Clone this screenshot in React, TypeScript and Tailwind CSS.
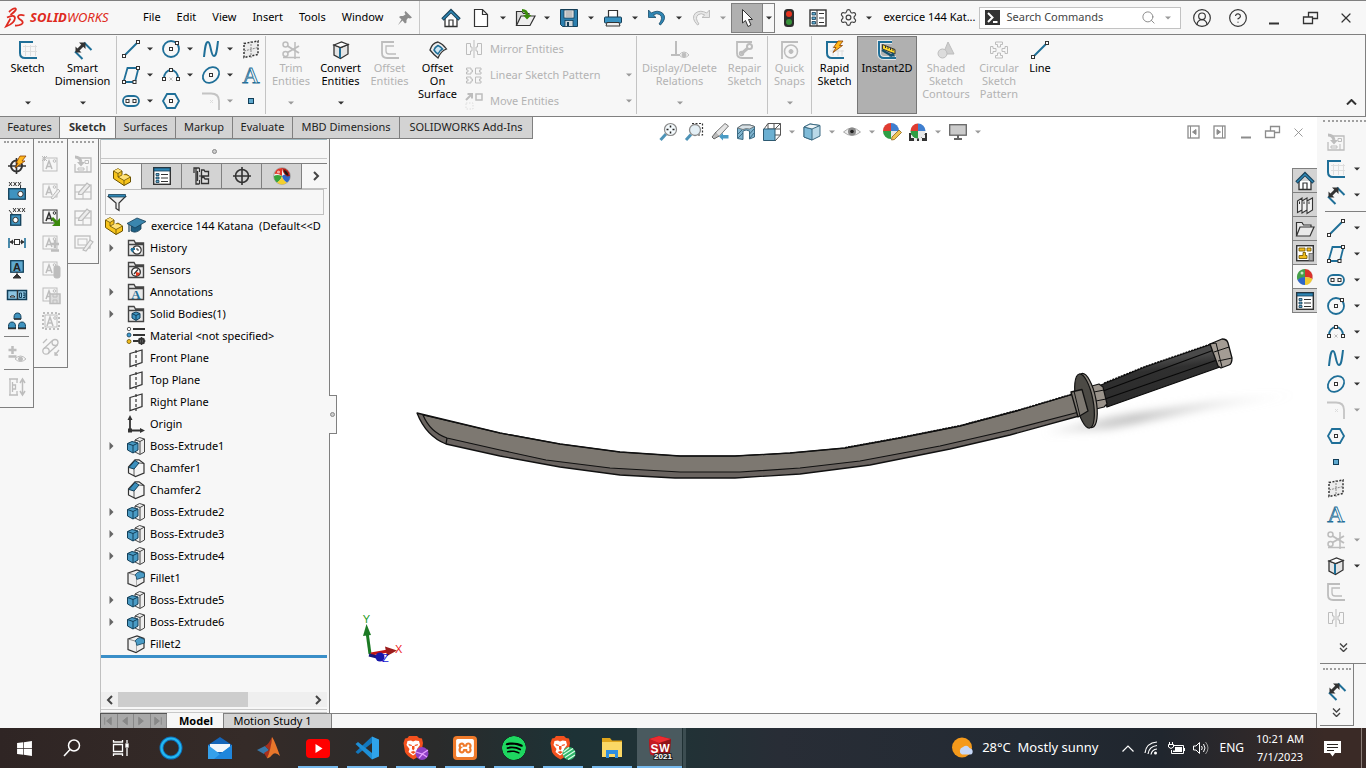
import type { ReactNode } from "react";
import { CircleHelp, CircleUserRound, Search, Settings, X } from "lucide-react";
import { FaWindows } from "react-icons/fa";
import { SiSpotify, SiXampp } from "react-icons/si";

type IconName = string;

const BLUE = "#1f6f98";
const SKY = "#5fa9cf";
const DARK = "#333333";
const GREY = "#bdbdbd";

const sq = (x: number, y: number, c = DARK) => (
  <rect x={x - 1.5} y={y - 1.5} width="3" height="3" fill="#fff" stroke={c} />
);

const ball = (x: number, y: number, r: number) => (
  <g stroke="none">
    <circle cx={x} cy={y} r={r} fill="#e8e8e8" />
    <path d={`M${x} ${y}V${y - r}A${r} ${r} 0 0 1 ${x + r} ${y}Z`} fill="#3f7fd0" />
    <path d={`M${x} ${y}V${y - r}A${r} ${r} 0 0 0 ${x - r} ${y}Z`} fill="#e03c31" />
    <path d={`M${x} ${y}V${y + r}A${r} ${r} 0 0 1 ${x - r} ${y}Z`} fill="#2f9e44" />
  </g>
);

const noteA = (
  <>
    <rect x="1" y="2" width="14" height="13" />
    <path d="M4 13L7 5L10 13M5 10.5H9" strokeWidth="1.5" />
    <circle cx="12.5" cy="5" r="1.3" />
  </>
);

const folder = <path d="M1.5 16.5V1.5H7L8.5 4H16.5V16.5ZM1.5 5.5H16" fill="#e9e9e9" stroke="#444" strokeWidth="1.4" />;

/* Glyphs on an 18-unit grid; `c` is the outline colour and `b` the accent colour. */
function glyph(name: IconName, c: string, b: string): ReactNode {
  switch (name) {
    case "sketch":
      return (<><path d="M6.5 4V15M11.5 4V15M16.5 4V15M4 5.5H18M4 10.5H18" stroke="#dedede" /><path d="M14 1H1V12Q1 17 6 17H18" stroke={b} strokeWidth="2" /></>);
    case "smart":
      return (<><path d="M1 10.5L8.5 18M10 1.5L17.5 9" stroke={b} strokeWidth="2" /><path d="M4 9L9 4" strokeWidth="3" /><path d="M1.5 11.5V5.5L7.5 11.5ZM5 1.5H11.5V8Z" fill={c} stroke="none" /></>);
    case "line":
      return (<><path d="M2 16L16 2" stroke={b} strokeWidth="2" />{sq(2, 16, c)}{sq(16, 2, c)}</>);
    case "circle":
      return (<><circle cx="9" cy="9" r="8" stroke={b} strokeWidth="1.8" />{sq(9, 9, c)}{sq(15, 3, c)}</>);
    case "spline":
      return <path d="M2 17C3 8 3.5 2 6 2C9 2 8.5 16 12 16C14.5 16 15 9 16 1" stroke={b} strokeWidth="2" />;
    case "plane3d":
      return (<><path d="M2 3.5L16 1V14.5L2 17.5Z" fill="#ececec" strokeWidth="1.5" strokeDasharray="2 1.5" /><path d="M9 1V18M2 11L16 7.5" stroke="#888" strokeDasharray="2 1" /></>);
    case "para":
      return (<><path d="M5.5 2H16.5L13 16H1.5Z" stroke={b} strokeWidth="1.8" />{sq(2, 16, c)}{sq(16, 2, c)}{sq(12.5, 16, c)}</>);
    case "arc":
      return (<><path d="M2 12A7 8 0 0 1 16 12" stroke={b} strokeWidth="1.8" /><path d="M7.5 11.5L10.5 14.5M10.5 11.5L7.5 14.5" stroke="#bbb" />{sq(2, 13, c)}{sq(16, 13, c)}{sq(9, 4, c)}</>);
    case "ellipse":
      return (<><ellipse cx="9" cy="9" rx="9" ry="7" transform="rotate(-42 9 9)" stroke={b} strokeWidth="1.8" />{sq(9, 9, c)}</>);
    case "letter":
      return <text x="9" y="17" textAnchor="middle" fontFamily="Liberation Serif, serif" fontSize="24" fill="#fff" stroke={b} strokeWidth="0.9">A</text>;
    case "slot":
      return (<><rect x="1" y="4" width="16" height="10" rx="5" stroke={b} strokeWidth="1.8" />{sq(5.5, 9, c)}{sq(12.5, 9, c)}</>);
    case "hex":
      return (<><path d="M5 2H13L17 9L13 16H5L1 9Z" stroke={b} strokeWidth="1.8" />{sq(9, 9, c)}</>);
    case "fillet":
      return (<><path d="M0 1.5H9Q17 1.5 17 9V18" stroke="#c4c4c4" strokeWidth="1.8" /><path d="M8 8L11 11M11 8L8 11" stroke="#ddd" /></>);
    case "point":
      return <rect x="6.5" y="6.5" width="5" height="5" fill={SKY} stroke="#123f59" />;
    case "trim":
      return (<><circle cx="3.5" cy="3.5" r="2.5" strokeWidth="1.5" /><circle cx="3.5" cy="13" r="2.5" strokeWidth="1.5" /><path d="M5.5 5L17 12M5.5 11.5L17 5" strokeWidth="2" /><path d="M1 16.5H18M13 1V18" strokeWidth="1.5" /></>);
    case "convert":
      return (<><path d="M2 4L9 6.5L16 3.5V13L8.5 17.5L2 14Z" fill="#e4e4e4" strokeWidth="1.3" /><path d="M2 4L9.5 1L16 3.5L8.5 6.5Z" fill="#fff" strokeWidth="1.3" /><path d="M8 7V17" stroke={b} strokeWidth="2" /></>);
    case "offset":
      return (<><path d="M13 1H1V12Q1 17 6 17H18" strokeWidth="1.8" /><path d="M13 5H5V10Q5 13 8 13H15" strokeWidth="1.3" /></>);
    case "surface":
      return (<><path d="M1 9Q3 2 9 1Q14 3 17.5 8Q12 10 9 17Q5 14 1 9Z" fill="#eee" strokeWidth="1.3" /><path d="M5 9Q6 6 9 4.5Q12 6 13.5 8Q10.5 9.5 9 13Q6.5 11.5 5 9Z" fill="#cfe6f3" stroke={b} strokeWidth="1.5" /></>);
    case "mirror":
      return <path d="M9 0V18M1.5 3.5H5.5V7H7V11H5.5V14.5H1.5ZM16.5 3.5H12.5V7H11V11H12.5V14.5H16.5Z" />;
    case "linpat":
      return <path d="M1.5 2H6V4H7.5V6H6V8H1.5V6H3V4H1.5ZM10.5 2H16V4H14.5V6H16V8H10.5ZM1.5 11H6V13H7.5V15H6V17H1.5V15H3V13H1.5ZM10.5 11H16V13H14.5V15H16V17H10.5Z" />;
    case "move":
      return (<><path d="M1 8L6 3M2.5 2H7V6.5" strokeWidth="2" /><rect x="11" y="2" width="6" height="6" strokeWidth="1.5" /><rect x="1" y="11" width="7" height="6" strokeDasharray="1.5 1.5" stroke="#ddd" /></>);
    case "relations":
      return (<><path d="M5 0V14M0 14H9" strokeWidth="2" /><path d="M8 14Q13 8 18 14Q13 19 8 14Z" /><circle cx="13" cy="14" r="2" fill={c} /></>);
    case "repair":
      return (<><path d="M16 1H1V12Q1 17 6 17H17" strokeWidth="1.8" /><path d="M5 13L12 7" strokeWidth="3" /><circle cx="13.5" cy="5.5" r="2.5" strokeWidth="2" /><circle cx="5.5" cy="12.5" r="1.8" strokeWidth="1.8" /></>);
    case "snaps":
      return (<><path d="M17 1H1V18" strokeWidth="1.8" /><circle cx="10" cy="10.5" r="6.5" strokeWidth="1.5" /><circle cx="10" cy="10.5" r="2" fill={c} /></>);
    case "rapid":
      return (<><path d="M7 5V15M12 5V15M16 9V15M4 10H18" stroke="#dedede" /><path d="M14 1H1V12Q1 17 6 17H18" stroke={b} strokeWidth="2" /><path d="M12 0H17L13.5 4.5H16.5L7 11.5L10 6.5H7.5Z" fill="#ffb71b" stroke="#8a3d00" strokeWidth="0.8" /></>);
    case "instant":
      return (<><path d="M14 1H1V12Q1 17 6 17H18" stroke="#fff" strokeWidth="4" strokeOpacity="0.7" /><path d="M14 1H1V12Q1 17 6 17H18" stroke={b} strokeWidth="2" /><path d="M4.5 3.5L17 8.5V13L4.5 8Z" fill="#ffd92e" stroke="#333" strokeWidth="1" /><path d="M7.5 5V7M10 6V8M12.5 7V9M15 8V10" stroke="#333" /><path d="M4 9L14 15" stroke="#14506f" strokeWidth="2.2" /><path d="M11 15.5H17L15 11Z" fill="#14506f" stroke="none" /></>);
    case "shaded":
      return (<><path d="M11 1L17 13H6Z" fill="#cfcfcf" /><circle cx="5.5" cy="12.5" r="4.5" fill="#dcdcdc" /></>);
    case "circpat":
      return <path d="M5.5 1H12.5V3.5H10.5V6H7.5V3.5H5.5ZM5.5 17H12.5V14.5H10.5V12H7.5V14.5H5.5ZM0.5 5.5V12.5H3V10.5H6V7.5H3V5.5ZM17.5 5.5V12.5H15V10.5H12V7.5H15V5.5Z" />;
    case "home":
      return (<><path d="M3 9V17.5H15V9" fill="#fff" strokeWidth="1.3" /><path d="M0.5 10.5L9 2L17.5 10.5" stroke="#173f57" strokeWidth="3.5" /><path d="M1 10L9 2.2L17 10" stroke="#2f88b5" strokeWidth="1.5" /><path d="M7 17.5V11H11V17.5" strokeWidth="1.2" /></>);
    case "new":
      return <path d="M2.5 0.5H10.5L15.5 5.5V17.5H2.5ZM10.5 0.5V5.5H15.5" fill="#fff" strokeWidth="1.2" />;
    case "open":
      return (<><path d="M0.5 16.5V2.5H6L7.5 4.5H13V7" fill="#ddd" strokeWidth="1.2" /><path d="M0.5 16.5L5 7H19L14 16.5Z" fill="#eee" strokeWidth="1.2" /><path d="M6 0Q12 0 12.5 6H15.5L11 10.5L7 6H9.5Q9.5 3 6 2.5Z" fill="#3a8a0c" stroke="none" /></>);
    case "save":
      return (<><path d="M0.5 0.5H17.5V17.5H2.5L0.5 15.5Z" fill="#2c7fae" stroke="#173f57" /><rect x="4" y="1" width="10" height="8" fill="#eee" stroke="#173f57" strokeWidth="0.8" /><path d="M5.5 3H12.5M5.5 5H12.5M5.5 7H12.5" stroke="#777" strokeWidth="0.8" /><rect x="5" y="11.5" width="8" height="6" fill="#cfd8dd" stroke="#173f57" strokeWidth="0.8" /><rect x="7" y="13" width="2" height="4" fill="#173f57" stroke="none" /></>);
    case "print":
      return (<><path d="M4.5 8V1.5H13.5V8" fill="#fff" strokeWidth="1.2" /><rect x="0.5" y="8" width="17" height="6" rx="1" fill="#3b93c1" stroke="#173f57" /><path d="M3 13.5H15L16 17H2Z" fill="#eee" strokeWidth="1" /></>);
    case "undo":
      return <path d="M0.5 1V8.5H8L5.3 6Q9 3.5 12 5.8Q15.5 9 11 15L12.5 16Q19.5 9 14.5 4Q9.5 0.5 3.3 4Z" fill="#2f86b4" stroke="#184b69" strokeWidth="0.8" />;
    case "redo":
      return <path d="M17.5 1V8.5H10L12.7 6Q9 3.5 6 5.8Q2.5 9 7 15L5.5 16Q-1.5 9 3.5 4Q8.5 0.5 14.7 4Z" fill="#e6e6e6" stroke="#bdbdbd" />;
    case "cursor":
      return <path d="M4.5 0.5V14L7.5 11.5L10 17.5L13 16L10.5 10.5H14.5Z" fill="#fff" stroke="#333" />;
    case "traffic":
      return (<><rect x="4" y="0" width="10" height="18" rx="3.5" fill="#2d2d2d" stroke="none" /><circle cx="9" cy="5" r="3" fill="#e6331f" stroke="none" /><circle cx="9" cy="13" r="3" fill="#38913a" stroke="none" /></>);
    case "options":
      return (<><rect x="1" y="1" width="16" height="16" fill="#fff" strokeWidth="1.4" /><path d="M8 1V17" /><path d="M3 3.5H6.5V6H3ZM3 8H6.5V10.5H3ZM3 12.5H6.5V15H3Z" fill={SKY} stroke="#173f57" strokeWidth="0.8" /><path d="M10 4.5H15M10 9H15M10 13.5H15" strokeWidth="1.2" /></>);
    case "proplist":
      return (<><rect x="0.7" y="0.7" width="16.6" height="16.6" fill="#fff" strokeWidth="1.4" /><rect x="1" y="1" width="16" height="3" fill="#2f86b4" stroke="#173f57" strokeWidth="0.8" /><path d="M3 6.5H6V8.5H3ZM3 10H6V12H3ZM3 13.5H6V15.5H3Z" fill={SKY} stroke="#173f57" strokeWidth="0.8" /><path d="M8 7.5H15M8 11H15M8 14.5H15" strokeWidth="1.2" /></>);
    case "part":
      return (<><path d="M0.5 3L5 0.7L9 3V8L13 6L17.5 9V14L11 17.5L0.5 10.5Z" fill="#f6c31c" stroke="#6b5200" /><path d="M0.5 3L5 5.5L9 3L5 0.7ZM5 8.5L9 6.5L17.5 9L11 12.5Z" fill="#ffe27a" stroke="none" /><path d="M0.5 3L5 5.5L9 3M5 5.5V9L11 12.5L17.5 9M11 12.5V17.5M5 9L9 7" stroke="#6b5200" strokeWidth="0.8" /></>);
    case "config":
      return (<><path d="M6.5 1H3V17H6.5M1 6V1H3M4.5 4V14" strokeWidth="1.3" /><path d="M6.5 1V5M6.5 13V17M6 9H9" /><path d="M8.5 3H11L12 4.5H15.5V9H8.5ZM8.5 10.5H11L12 12H15.5V16.5H8.5Z" fill="#ddd" strokeWidth="1.3" /></>);
    case "target":
      return (<><circle cx="9" cy="9" r="6.5" strokeWidth="1.6" /><path d="M9 0V18M0 9H18" strokeWidth="1.6" /></>);
    case "ball":
      return (<><circle cx="9" cy="9" r="8.3" fill="#f2f2f2" stroke="#777" strokeWidth="0.6" /><path d="M9 9V1A8 8 0 0 0 1.5 7Q5 6 9 9Z" fill="#e03324" stroke="none" /><path d="M9 9Q4 7 1 9A8 8 0 0 0 4 15.5Q8 13 9 9Z" fill="#3aa53a" stroke="none" /><path d="M9 9Q8 13 4 15.5A8 8 0 0 0 14 15.5Q10 13 9 9Z" fill="#f3cf2f" stroke="none" /><path d="M9 9Q10 13 14 15.5A8 8 0 0 0 17 8Q12 6 9 9Z" fill="#2f67c7" stroke="none" /><path d="M9 1A8 8 0 0 1 17 9L14 9.5Q10 7 9 1Z" fill="#b02018" stroke="none" /><path d="M11 3Q15 4 15.5 9Q11 7.5 11 3Z" fill="#201818" stroke="none" /><circle cx="5.5" cy="5" r="1.6" fill="#fff" opacity="0.6" stroke="none" /></>);
    case "rgb":
      return (<><circle cx="9" cy="9" r="8" fill="#ddd" stroke="none" /><path d="M9 9V1A8 8 0 0 0 1.5 12Q6 10 9 9Z" fill="#46a049" stroke="none" /><path d="M9 9V1A8 8 0 0 1 16.5 11Q13 9 9 9Z" fill="#d9322b" stroke="none" /><path d="M9 9Q14 9 16.500 11Q14 17 9 17Z" fill="#f1ca2e" stroke="none" /><path d="M9 9Q4 9 1.5 12Q4 17 9 17Z" fill="#2f67c7" stroke="none" /><circle cx="6" cy="5" r="1.5" fill="#fff" opacity="0.7" stroke="none" /></>);
    case "filter":
      return (<><path d="M0.5 3.5H17.5L11 10V17.5L8 15.5V10Z" fill="#eee" strokeWidth="1.2" /><path d="M0.5 1.5H17.5V4H0.5Z" fill="#2f86b4" stroke="#173f57" strokeWidth="0.8" /></>);
    case "cap":
      return (<><path d="M4 9V14Q9 17 14 12V7Z" fill="#1d5e82" stroke="#173f57" strokeWidth="0.8" /><path d="M0 6.5L10 1L19 4.5L8 11Z" fill="#3a86ae" stroke="#173f57" strokeWidth="0.8" /><path d="M2 7.5V15" stroke="#173f57" strokeWidth="1.2" /></>);
    case "history":
      return (<>{folder}<circle cx="10" cy="11" r="4.2" fill="#fff" strokeWidth="1.2" /><path d="M10 9V11H12" /><path d="M4 10H8M4 10L6 13" stroke={b} strokeWidth="1.8" /></>);
    case "sensors":
      return (<>{folder}<circle cx="9" cy="11" r="4.3" fill="#fff" strokeWidth="1.4" /><path d="M7 13L11 8.5" strokeWidth="1.3" /><path d="M9 11L13 12Q12 15 9 15Z" fill="#e5391f" stroke="none" /></>);
    case "annot":
      return (<>{folder}<text x="9" y="15.5" textAnchor="middle" fontFamily="Liberation Serif, serif" fontWeight="700" fontSize="13" fill={b} stroke="none">A</text></>);
    case "solid":
      return (<>{folder}<path d="M5 8.5L9 7L13 8.5V13L9 15.5L5 13Z" fill="#3b93c1" stroke="#123f59" /><path d="M5 8.5L9 10.5L13 8.5M9 10.5V15" stroke="#123f59" /></>);
    case "material":
      return (<><circle cx="2" cy="2" r="1.7" fill="#fff" strokeWidth="0.8" /><circle cx="2" cy="8" r="2" fill="#3b9bd0" stroke="#173f57" strokeWidth="0.8" /><circle cx="2" cy="14.5" r="2" fill="#f3bd1b" stroke="#6b5200" strokeWidth="0.8" /><path d="M6 2H18M6 8H18M6 14H11" strokeWidth="1.8" /><circle cx="14.5" cy="14" r="2.5" strokeWidth="2" /><path d="M14.5 10V18M10.5 14H18.5M12 11.5L17 16.5M17 11.5L12 16.5" strokeWidth="1" /></>);
    case "plane":
      return (<><path d="M3 4.5L15 1V13.5L3 17.5Z" strokeWidth="1.3" /><path d="M9 1V18" strokeDasharray="3 2" strokeWidth="1.2" /></>);
    case "origin":
      return (<><path d="M3 3V15.5H14" strokeWidth="1.8" /><path d="M0.5 5L3 0L5.5 5ZM13 13L18 15.5L13 18Z" fill={c} stroke="none" /><rect x="1" y="13.5" width="4" height="4" fill={c} stroke="none" /></>);
    case "boss":
      return (<><path d="M8 3L12.5 0.5L17.5 2V15L13 17.5L8 15Z" fill="#eee" stroke="#444" /><path d="M8 3L13 4.5V17M13 4.5L17.5 2" stroke="#444" /><path d="M0.5 6.5L5 4.5L11 6V13L6 16L0.5 13Z" fill="#4a9bc5" stroke="#123f59" /><path d="M0.5 6.5L6 8.5L11 6M6 8.5V16" stroke="#123f59" /></>);
    case "chamfer":
      return (<><path d="M1.5 8L8 0.8L12 0.8L17 4.5V14L8.5 17.5L1.5 14Z" fill="#f4f4f4" strokeWidth="1.2" /><path d="M2 8.5L8 1.5L12 4L7 10Z" fill="#3b8fbd" stroke="#123f59" /><path d="M12 4L17 4.5M7 10V17" strokeWidth="0.8" /></>);
    case "filletf":
      return (<><path d="M1 4L10 1L17 3.5V13L9 17.5L1 14.5Z" fill="#efefef" strokeWidth="1.2" /><path d="M8 6Q10 3 13 2.5L17.5 4.5V8L9.5 10.5Q10 7.5 8 6Z" fill="#4a9bc5" stroke="#123f59" strokeWidth="0.8" /><path d="M1 4L8 6" stroke="#777" strokeWidth="0.8" /><path d="M9.5 10.5V17" stroke="#999" strokeWidth="0.8" /></>);
    case "books":
      return (<><path d="M1.5 5L6 2V14L1.5 16.5ZM6 5L11 2V14L6 17ZM11 5L16.5 2V14L11 17.5Z" fill="#f1f1f1" strokeWidth="1.1" /><path d="M3.500 5.500V8M8 5.500V8M13 5.500V8" strokeWidth="1" /></>);
    case "folderopen":
      return <path d="M0.5 16V2.5H6L7.5 5H15V7M0.5 16L4 7H18L14 16Z" fill="#e9e9e9" strokeWidth="1.2" />;
    case "palette":
      return (<><rect x="0.7" y="1.7" width="16.6" height="15" fill="#fff" strokeWidth="1.4" /><path d="M3 4H9V7H3ZM11 4H15V7H11ZM7 8.5V11.5H3V14.5H11V11.5H9.5V8.5Z" fill="#f3bd1b" stroke="#6b5200" strokeWidth="0.8" /><rect x="13" y="9.5" width="4" height="7" fill="#aaa" stroke="#666" strokeWidth="0.8" /></>);
    case "zoomfit":
      return (<><path d="M7 11L1.500 17" stroke="#4d93b7" strokeWidth="3" /><circle cx="11.5" cy="6.5" r="6" fill="#f4fafd" stroke="#8a8a8a" strokeWidth="1.2" /><path d="M11.5 2.500V4.500M11.5 8.500V10.500M7.500 6.5H9.500M13.500 6.5H15.500" stroke="#222" strokeWidth="1.5" /></>);
    case "zoomarea":
      return (<><path d="M7 0.5H17.5V12H13" strokeDasharray="2 1.5" strokeWidth="1.2" /><path d="M6 11.5L1 17" stroke="#4d93b7" strokeWidth="3" /><circle cx="10" cy="7" r="5.5" fill="#e4eff5" stroke="#8a8a8a" strokeWidth="1.3" /></>);
    case "prevview":
      return (<><path d="M14 0.5L17.5 3L8 13.5L4 10Z" fill="#e4e4e4" stroke="#777" /><path d="M5 9L1 14L3 16L8 13" fill="#bbb" stroke="#666" /><path d="M8 13.5L12 10V12H17.5V15.5H12V17.5Z" fill="#4a9bc5" stroke="none" /></>);
    case "section":
      return (<><path d="M0.500 5L5 2H13L17.500 3.500V14L12.500 16V8Q9 6 6 8V16.500L0.500 15.500Z" fill="#7fb4cf" stroke="#3c6b83" /><path d="M0.500 5L5 2H13L17.500 3.500L12.500 6Q9 5 6 6.500Z" fill="#d8e2e7" stroke="#666" strokeWidth="0.8" /><path d="M1 11L5 7M1 15L6 10M12.500 11L17 6M13 15L17 10" stroke="#2d5a72" strokeWidth="0.8" /></>);
    case "orient":
      return (<><path d="M5 0.5H17.5V12H5ZM5 6H17.5M11 0.5V6M1 6L5 0.5M12 18L17.5 12M12 6L17.5 0.5" stroke="#555" /><path d="M0.5 6H12V17.5H0.5Z" fill="#6cb0d2" stroke="#2d5a72" /></>);
    case "display":
      return (<><path d="M1 4L7 1L17 2.500V13L9 17L1 14Z" fill="#b9d9e8" stroke="#3c6b83" /><path d="M1 4L9 6V17L1 14Z" fill="#7fbbd8" stroke="#3c6b83" /><path d="M1 4L7 1L17 2.500L9 6Z" fill="#eef5f8" stroke="#3c6b83" /></>);
    case "eye":
      return (<><path d="M0.5 9Q9 1 17.5 9Q9 16 0.5 9Z" fill="#eee" stroke="#aaa" /><circle cx="9" cy="8.5" r="4" fill="#8a8a8a" stroke="none" /><circle cx="9" cy="8.5" r="1.8" fill="#222" stroke="none" /></>);
    case "appear":
      return (<>{ball(8, 8, 8)}<path d="M9 14L16 7L18.5 9.5L11.5 16.5L8.5 17Z" fill="#f0c453" stroke="#8a6420" strokeWidth="0.8" /></>);
    case "scene":
      return (<><path d="M0 10H18V18H0Z" fill="#333" stroke="none" /><path d="M2 12H5V15H2ZM13 12H16V15H13ZM5 15H8V18H5ZM10 15H13V18H10Z" fill="#eee" stroke="none" />{ball(9, 8, 7.5)}</>);
    case "monitor":
      return (<><rect x="0.7" y="1.7" width="16.6" height="10.5" fill="#ccc" stroke="#666" strokeWidth="1.3" /><path d="M9 12V16M5 16H13" stroke="#666" strokeWidth="2" /></>);
    case "panL":
    case "panR":
      return (<><rect x="3" y="3" width="11" height="12" strokeWidth="1.3" />{name === "panL" ? <path d="M5.5 3V15M11 6.5V11.5L7.5 9Z" fill={c} /> : <path d="M11.5 3V15M6 6.5V11.5L9.5 9Z" fill={c} />}</>);
    case "min":
      return <path d="M4 14.5H14" strokeWidth="2" />;
    case "restore":
      return <path d="M7.5 8V3.5H16.5V9.5H12M2.5 8H11.5V14.5H2.5Z" strokeWidth="1.3" />;
    case "boltTarget":
      return (<><circle cx="8.5" cy="10" r="5.5" strokeWidth="2" /><path d="M8.5 2V18M0 10H18" strokeWidth="1.6" /><path d="M12 0H18L14 5H17L7 12L10 7H8Z" fill="#ffb71b" stroke="#8a3d00" strokeWidth="0.8" /></>);
    case "dimbox":
      return (<><path d="M1 0L4 4M4 0L1 4M5.5 0L8.5 4M8.5 0L5.5 4M10 0L13 4M13 0L10 4M12.5 4V10" /><rect x="0.7" y="6.7" width="16.6" height="10.5" fill="#3f93bf" stroke="#123f59" strokeWidth="1.3" /><circle cx="12.5" cy="12" r="2.7" fill="#fff" /></>);
    case "dimbox2":
      return (<><path d="M5 0L8 4M8 0L5 4M9.5 0L12.5 4M12.5 0L9.5 4M14 0L17 4M17 0L14 4M1 2L5 7" /><rect x="2.7" y="6.7" width="10" height="10.5" fill="#3f93bf" stroke="#123f59" strokeWidth="1.3" /><circle cx="7.5" cy="12" r="2.7" fill="#fff" /></>);
    case "basicdim":
      return (<><path d="M1 4V14M17 4V14" stroke={BLUE} strokeWidth="1.6" /><path d="M2 8H16" /><path d="M1.5 8L5 5.5V10.5ZM16.5 8L13 5.5V10.5Z" fill={c} stroke="none" /><rect x="6.5" y="5.5" width="5" height="5" fill="#fff" /></>);
    case "datum":
      return (<><rect x="2.7" y="0.7" width="12.6" height="11.5" fill="#5fa9cf" stroke="#123f59" strokeWidth="1.3" /><text x="9" y="10.5" textAnchor="middle" fontFamily="Liberation Sans, sans-serif" fontWeight="700" fontSize="11" fill="#222" stroke="none">A</text><path d="M9 12V15M5 18L9 14L13 18Z" fill={c} /></>);
    case "geotol":
      return (<><rect x="-0.5" y="4.5" width="19" height="9" fill="#8cc4e0" stroke="#123f59" strokeWidth="1.5" /><path d="M9.5 4V14" strokeWidth="1.5" /><path d="M2 11A3 3 0 0 1 7 11Z" fill="#fff" /><path d="M11.5 7H13.5V11.5H11.5ZM15 7H17V11.5H15M15 9.2H17" stroke="#123f59" /></>);
    case "people":
      return (<><path d="M6 7V5.5Q6 1 9.5 1Q13 1 13 5.5V7ZM0.5 16V14.5Q0.5 10 4 10Q7.5 10 7.5 14.5V16ZM10.5 16V14.5Q10.5 10 14 10Q17.5 10 17.5 14.5V16Z" fill="#3f93bf" stroke="#123f59" /><path d="M6 7H13M0 16.5H8M10 16.5H18" strokeWidth="1.6" /></>);
    case "plusEye":
      return (<><path d="M4.5 1V9M0.5 5H8.5M0.5 11.5H8.5" strokeWidth="2.5" /><path d="M7 14Q12.5 8 18 14Q12.5 19 7 14Z" /><circle cx="12.5" cy="14" r="2" fill={c} /></>);
    case "vdim":
      return (<><path d="M1 1H10M1 17H10M2 1V17M4.500 4V14M4.500 7H7.500V11H4.500M9 1V5M9 13V17" strokeWidth="1.3" /><path d="M14.5 2V16" strokeWidth="1.5" /><path d="M12 5L14.5 1L17 5M12 13L14.5 17L17 13" strokeWidth="1.5" /></>);
    case "noteNew":
      return (<>{noteA}<path d="M0 0L5 5M5 0L0 5M2.5 0V5" /></>);
    case "noteEdit":
      return (<>{noteA}<path d="M9 16L16 7L18 9L11 17Z" fill="#eee" /></>);
    case "noteGo":
      return (<>{noteA}<path d="M10 10L15 15" stroke="#3a8a0c" strokeWidth="3" /><path d="M18 10V18H10Z" fill="#3a8a0c" stroke="none" /></>);
    case "notePlus":
      return (<>{noteA}<path d="M13 6V14M9 10H17M9 16.5H17" strokeWidth="2.5" /></>);
    case "noteLight":
      return (<>{noteA}<rect x="12" y="6" width="6" height="12" rx="2" fill={c} /></>);
    case "noteSave":
      return (<>{noteA}<rect x="8" y="8" width="10" height="9.5" fill="#ddd" strokeWidth="1.5" /><path d="M11 8V11H15V8M11 17V14H15V17" /></>);
    case "noteGear":
      return (<><rect x="1" y="1" width="16" height="16" strokeDasharray="2 2" strokeWidth="2" /><rect x="3" y="3" width="12" height="12" /><path d="M5 14L8 5L11 14M6 11H10" strokeWidth="1.5" /><circle cx="13" cy="6" r="1.3" /></>);
    case "pencils":
      return (<><circle cx="4" cy="13" r="3.2" strokeWidth="1.3" /><circle cx="13" cy="4.5" r="3" strokeWidth="1.3" /><path d="M2 10.5L11 2M6 15.5L15.5 7M1 5L5 1M17 12L13 17M13 14V17H16" strokeWidth="1.3" /></>);
    case "table":
      return (<><path d="M5 2H17V16H1V8" strokeWidth="1.3" /><path d="M1 1Q6 1 7 6" strokeWidth="3" /><path d="M3 6H11L7 10.500Z" fill={c} stroke="none" /><path d="M11 4.500H14.500V7.500H11ZM4 12H10V14H4ZM13 10V16" /></>);
    case "tableEdit":
      return (<><rect x="1" y="3" width="16" height="14" strokeWidth="1.3" /><path d="M1 10H17M9 10V17" /><path d="M4.500 12.500L5 10L13 1L16 3.500L8 12.500Z" fill="#ececec" strokeWidth="1.2" /></>);
    case "sheetEdit":
      return (<><rect x="1" y="2" width="15" height="12" strokeWidth="1.3" /><rect x="4" y="5" width="9" height="6" /><path d="M9 16L16 6L19 8L12 17Z" fill="#eee" strokeWidth="1.2" /></>);
    default:
      return null;
  }
}

function Icon({ name, off = false, muted = false }: { name: IconName; off?: boolean; muted?: boolean }) {
  const c = off ? GREY : muted ? "#8c8c8c" : DARK;
  return (
    <svg width="18" height="18" viewBox="0 0 18 18" fill="none" stroke={c} className="shrink-0 overflow-visible" aria-hidden="true">
      {glyph(name, c, off ? GREY : BLUE)}
    </svg>
  );
}

function Caret({ off = false }: { off?: boolean }) {
  return (
    <svg width="6" height="4" viewBox="0 0 6 4" className="shrink-0" aria-hidden="true">
      <path d="M0 0.5H6L3 3.5Z" fill={off ? "#9a9a9a" : "#333"} />
    </svg>
  );
}

function IconButton({ name, label, off, muted, className = "" }: { name: IconName; label: string; off?: boolean; muted?: boolean; className?: string }) {
  return (
    <button type="button" aria-label={label} className={`flex shrink-0 items-center justify-center ${className}`}>
      <Icon name={name} off={off} muted={muted} />
    </button>
  );
}

function TitleTool({ name, label, off }: { name: IconName; label: string; off?: boolean }) {
  return (
    <div className="flex w-11 shrink-0 items-center">
      <IconButton name={name} label={label} off={off} className="w-6" />
      <button type="button" aria-label={`${label} options`} className="flex h-6 w-5 items-center justify-center">
        <Caret off={off} />
      </button>
    </div>
  );
}

function TitleBar() {
  return (
    <header className="flex h-[35px] items-center border-y border-[#808080]">
      <div className="flex w-[143px] shrink-0 items-center pl-1">
        <svg width="22" height="22" viewBox="0 0 22 22" fill="none" stroke="#df2a20" strokeWidth="1.8" aria-hidden="true">
          <path d="M5 5Q9 1 11.500 1.500Q13.500 2.500 6.500 8" />
          <path d="M3 10.500Q10.500 7 11 11Q10.500 16.500 2 19.500L6.500 11.500" />
          <path d="M20.500 8.500Q15 7 14 9.500Q14 11.500 17 13Q20.500 15.500 17 17.500Q15 18.700 11 18.500" />
        </svg>
        <span className="ml-1 text-[13px] italic text-[#df2a20]"><b>SOLID</b>WORKS</span>
      </div>
      <nav className="flex shrink-0 gap-4 text-[11px]">
        {["File", "Edit", "View", "Insert", "Tools", "Window"].map((m) => (
          <button key={m} type="button">{m}</button>
        ))}
      </nav>
      <button type="button" aria-label="Pin menu" className="ml-3 flex w-5 shrink-0 justify-center">
        <svg width="14" height="14" viewBox="0 0 14 14" fill="#8c8c8c" aria-hidden="true">
          <path d="M7.5 0L14 6.5L12 7.5L10 7L8.5 9L8.5 11.5L7 12.5L4.5 9.5L0 14L3.5 8.5L1 6L2.5 5H5L7.5 3.5L6.5 1.5Z" />
        </svg>
      </button>
      <div className="ml-1 flex h-full shrink-0 items-center border-l border-[#c8c8c8] pl-[19px]">
        <IconButton name="home" label="Home" className="w-6" />
        <div className="w-1.5" />
        <TitleTool name="new" label="New" />
        <TitleTool name="open" label="Open" />
        <TitleTool name="save" label="Save" />
        <TitleTool name="print" label="Print" />
        <TitleTool name="undo" label="Undo" />
        <div className="flex w-[42px] shrink-0"><TitleTool name="redo" label="Redo" off /></div>
        <div className="flex h-[30px] w-11 shrink-0 border border-[#808080]">
          <IconButton name="cursor" label="Select" className="flex-1 bg-[#b0b0b0]" />
          <button type="button" aria-label="Select options" className="flex w-3 items-center justify-center border-l border-[#808080]"><Caret /></button>
        </div>
        <IconButton name="traffic" label="Rebuild" className="w-7" />
        <IconButton name="options" label="File properties" className="w-[30px]" />
        <button type="button" aria-label="Settings" className="flex w-[30px] justify-center"><Settings size={19} strokeWidth={1.5} color="#444" /></button>
        <button type="button" aria-label="Settings list" className="flex w-3 justify-center"><Caret /></button>
      </div>
      <div className="ml-auto shrink-0 pl-2 text-[11px]">exercice 144 Kat...</div>
      <label className="ml-1 flex h-[22px] w-[202px] shrink-0 items-center border border-[#c2c2c2] bg-white pl-[5px]">
        <svg width="15" height="15" viewBox="0 0 15 15" aria-label="Search scope">
          <path d="M0 0H15V15H0Z" fill="#333" /><path d="M3 3L7.5 7.5L3 12M8 12H12.5" fill="none" stroke="#fff" strokeWidth="2" />
        </svg>
        <input aria-label="Search Commands" placeholder="Search Commands" className="ml-1.5 min-w-0 flex-1 bg-transparent text-[11px] outline-none placeholder:text-[#444]" />
        <Search size={15} strokeWidth={1.5} color="#888" />
        <span className="flex w-6 justify-center"><Caret off /></span>
      </label>
      <div className="ml-[3px] flex shrink-0 items-center pr-[3px] text-[#333]">
        <button type="button" aria-label="Account" className="flex w-9 justify-center"><CircleUserRound size={20} strokeWidth={1.4} /></button>
        <button type="button" aria-label="Help" className="flex w-9 justify-center"><CircleHelp size={20} strokeWidth={1.4} /></button>
        <IconButton name="min" label="Minimize" className="w-9" />
        <IconButton name="restore" label="Restore" className="w-9" />
        <button type="button" aria-label="Close" className="flex w-9 justify-center"><X size={16} strokeWidth={1.8} /></button>
      </div>
    </header>
  );
}

function Command({ name, lines, off, caret, width, active }: { name: IconName; lines: string[]; off?: boolean; caret?: boolean; width: string; active?: boolean }) {
  return (
    <button
      type="button"
      disabled={off}
      className={`relative flex h-[78px] shrink-0 flex-col items-center pt-1 leading-[13px] ${width} ${active ? "border border-[#777] bg-[#b0b0b0]" : "border border-transparent"} ${off ? "text-[#b3b3b3]" : "text-black"}`}
    >
      <Icon name={name} off={off} />
      <span className="mt-0.5 flex flex-col items-center whitespace-nowrap">
        {lines.map((l) => <span key={l}>{l}</span>)}
      </span>
      {caret && <span className="absolute bottom-2 left-1/2 -ml-[3px]"><Caret off={off} /></span>}
    </button>
  );
}

const Divider = () => <div className="h-[78px] w-px shrink-0 bg-[#c4c4c4]" />;

const sketchTools: { name: IconName; label: string; caret?: boolean; off?: boolean }[] = [
  { name: "line", label: "Line", caret: true },
  { name: "circle", label: "Circle", caret: true },
  { name: "spline", label: "Spline", caret: true },
  { name: "plane3d", label: "Plane" },
  { name: "para", label: "Parallelogram", caret: true },
  { name: "arc", label: "Arc", caret: true },
  { name: "ellipse", label: "Ellipse", caret: true },
  { name: "letter", label: "Text" },
  { name: "slot", label: "Slot", caret: true },
  { name: "hex", label: "Polygon" },
  { name: "fillet", label: "Sketch fillet", caret: true, off: true },
  { name: "point", label: "Point" },
];

const patternTools: { name: IconName; label: string; caret?: boolean }[] = [
  { name: "mirror", label: "Mirror Entities" },
  { name: "linpat", label: "Linear Sketch Pattern", caret: true },
  { name: "move", label: "Move Entities", caret: true },
];

function Ribbon() {
  return (
    <section className="flex h-[82px] items-start border-b border-r border-[#808080] pt-px text-[11px]">
      <Command name="sketch" lines={["Sketch"]} caret width="w-[55px]" />
      <Command name="smart" lines={["Smart", "Dimension"]} caret width="w-[55px]" />
      <div className="w-1.5 shrink-0" />
      <Divider />
      <div className="grid shrink-0 grid-cols-[40px_40px_40px_28px] grid-rows-[26px_26px_26px]">
        {sketchTools.map((t) => (
          <div key={t.label} className="flex items-center pl-[5px]">
            <IconButton name={t.name} label={t.label} off={t.off} />
            {t.caret && <button type="button" aria-label={`${t.label} options`} className="flex h-5 flex-1 items-center justify-center pl-0.5"><Caret off={t.off} /></button>}
          </div>
        ))}
      </div>
      <Divider />
      <Command name="trim" lines={["Trim", "Entities"]} off caret width="w-[50px]" />
      <Command name="convert" lines={["Convert", "Entities"]} caret width="w-[49px]" />
      <Command name="offset" lines={["Offset", "Entities"]} off width="w-[49px]" />
      <Command name="surface" lines={["Offset", "On", "Surface"]} width="w-[47px]" />
      <div className="grid w-[175px] shrink-0 grid-rows-[26px_26px_26px] text-[#b3b3b3]">
        {patternTools.map((t) => (
          <button key={t.label} type="button" className="flex items-center gap-[7px] px-1 text-left">
            <Icon name={t.name} off />
            <span className="flex-1 whitespace-nowrap">{t.label}</span>
            {t.caret && <Caret off />}
          </button>
        ))}
      </div>
      <Divider />
      <Command name="relations" lines={["Display/Delete", "Relations"]} off caret width="w-[85px]" />
      <Command name="repair" lines={["Repair", "Sketch"]} off width="w-[45px]" />
      <Divider />
      <Command name="snaps" lines={["Quick", "Snaps"]} off caret width="w-[43px]" />
      <Divider />
      <Command name="rapid" lines={["Rapid", "Sketch"]} width="w-[45px]" />
      <Command name="instant" lines={["Instant2D"]} active width="w-[60px]" />
      <Command name="shaded" lines={["Shaded", "Sketch", "Contours"]} off width="w-[58px]" />
      <Command name="circpat" lines={["Circular", "Sketch", "Pattern"]} off width="w-[48px]" />
      <Command name="line" lines={["Line"]} width="w-[34px]" />
      <button type="button" aria-label="Collapse ribbon" className="mr-1.5 mb-2 ml-auto flex h-3 w-4 items-center justify-center self-end">
        <svg width="11" height="6" viewBox="0 0 11 6" fill="none" stroke="#333" strokeWidth="2"><path d="M1 5.5L5.5 1L10 5.5" /></svg>
      </button>
    </section>
  );
}

const viewTools: { name: IconName; label: string; caret?: boolean }[] = [
  { name: "zoomfit", label: "Zoom to fit" },
  { name: "zoomarea", label: "Zoom to area" },
  { name: "prevview", label: "Previous view" },
  { name: "section", label: "Section view" },
  { name: "orient", label: "View orientation", caret: true },
  { name: "display", label: "Display style", caret: true },
  { name: "eye", label: "Hide or show items", caret: true },
  { name: "appear", label: "Edit appearance" },
  { name: "scene", label: "Apply scene", caret: true },
  { name: "monitor", label: "View settings", caret: true },
];

function TabRow() {
  const tabs = ["Features", "Sketch", "Surfaces", "Markup", "Evaluate", "MBD Dimensions", "SOLIDWORKS Add-Ins"];
  const widths = ["w-[60px]", "w-[56px]", "w-[60px]", "w-[57px]", "w-[60px]", "w-[107px]", "w-[133px]"];
  return (
    <div className="flex h-[22px] shrink-0 bg-white text-[11px]">
      {tabs.map((t, i) => (
        <button
          key={t}
          type="button"
          className={`shrink-0 border-r border-b border-[#808080] text-center whitespace-nowrap ${widths[i]} ${i === 1 ? "bg-[#f7f7f7] font-bold text-[#333]" : "bg-[#d3d3d3] text-[#222]"}`}
        >
          {t}
        </button>
      ))}
      <div className="z-10 flex h-[30px] flex-1 items-center justify-center pr-[74px]">
        {viewTools.map((t) => (
          <div key={t.label} className="flex items-center">
            <IconButton name={t.name} label={t.label} className="w-[26px]" />
            {t.caret && <button type="button" aria-label={`${t.label} options`} className="flex h-5 w-3.5 items-center justify-center"><Caret off /></button>}
          </div>
        ))}
      </div>
      <div className="z-10 flex h-[30px] items-center pr-1.5 text-[#8c8c8c]">
        <IconButton name="panL" label="Dock left" muted className="w-[26px]" />
        <IconButton name="panR" label="Dock right" muted className="w-[26px]" />
        <IconButton name="min" label="Minimize document" muted className="w-[26px]" />
        <IconButton name="restore" label="Restore document" muted className="w-[26px]" />
        <button type="button" aria-label="Close document" className="flex w-[26px] justify-center"><X size={15} strokeWidth={1.4} /></button>
      </div>
    </div>
  );
}

const Grip = () => <div className="mx-1 h-0.5 border-t-2 border-dotted border-[#a0a0a0]" />;

function ToolColumn({ items, off = [], width }: { items: (IconName | null)[]; off?: IconName[]; width: string }) {
  return (
    <div className={`flex flex-col self-start border-r border-b border-[#808080] pt-0.5 pb-[7px] ${width}`}>
      <Grip />
      <div className="h-[9px]" />
      {items.map((n, i) =>
        n === null ? (
          <div key={i} className="mx-1 mt-0.5 mb-1 h-px bg-[#808080]" />
        ) : (
          <IconButton key={i} name={n} label={n} off={off.includes(n)} className="h-[26px]" />
        ),
      )}
    </div>
  );
}

const col2: IconName[] = ["noteNew", "noteEdit", "noteGo", "notePlus", "noteLight", "noteSave", "noteGear", "pencils"];
const col3: IconName[] = ["table", "tableEdit", "tableEdit", "sheetEdit"];

const tree: { icon: IconName; text: string; open?: boolean }[] = [
  { icon: "history", text: "History", open: true },
  { icon: "sensors", text: "Sensors" },
  { icon: "annot", text: "Annotations", open: true },
  { icon: "solid", text: "Solid Bodies(1)", open: true },
  { icon: "material", text: "Material <not specified>" },
  { icon: "plane", text: "Front Plane" },
  { icon: "plane", text: "Top Plane" },
  { icon: "plane", text: "Right Plane" },
  { icon: "origin", text: "Origin" },
  { icon: "boss", text: "Boss-Extrude1", open: true },
  { icon: "chamfer", text: "Chamfer1" },
  { icon: "chamfer", text: "Chamfer2" },
  { icon: "boss", text: "Boss-Extrude2", open: true },
  { icon: "boss", text: "Boss-Extrude3", open: true },
  { icon: "boss", text: "Boss-Extrude4", open: true },
  { icon: "filletf", text: "Fillet1" },
  { icon: "boss", text: "Boss-Extrude5", open: true },
  { icon: "boss", text: "Boss-Extrude6", open: true },
  { icon: "filletf", text: "Fillet2" },
];

function Chevron({ left = false }: { left?: boolean }) {
  return (
    <svg width="7" height="10" viewBox="0 0 7 10" fill="none" stroke="#444" strokeWidth="2" aria-hidden="true">
      <path d={left ? "M6 1L2 5L6 9" : "M1 1L5 5L1 9"} />
    </svg>
  );
}

function FeatureTree() {
  return (
    <section className="relative z-10 flex w-[230px] shrink-0 flex-col border-r border-l border-r-[#808080] border-l-[#c0c0c0] pr-0.5 text-[11px]">
      <div className="flex h-5 items-center justify-center border-t border-b border-t-[#9fb8c0] border-b-[#c8c8c8]">
        <span className="mt-1 size-[5px] rounded-full border border-[#888] bg-[#ccc]" />
      </div>
      <div className="mt-1 flex h-[26px] border-t border-[#808080]">
        {(["part", "proplist", "config", "target", "ball"] as const).map((n, i) => (
          <IconButton key={n} name={n} label={n} className={`border-r border-[#808080] ${i ? "w-10 border-b bg-[#d3d3d3]" : "w-[41px] pl-0.5"}`} />
        ))}
        <button type="button" aria-label="More tabs" className="flex flex-1 items-center justify-center border-b border-[#c0c0c0] pl-1"><Chevron /></button>
      </div>
      <div className="mx-1 mr-[3px] flex h-[26px] items-center border border-[#c0c0c0] pl-0.5">
        <IconButton name="filter" label="Filter tree" />
      </div>
      <div className="flex h-[22px] items-center pl-1 whitespace-nowrap">
        <Icon name="part" />
        <span className="ml-1"><Icon name="cap" /></span>
        <span className="ml-1.5 whitespace-pre">exercice 144 Katana  (Default&lt;&lt;D</span>
      </div>
      <ul>
        {tree.map((row) => (
          <li key={row.text} className="flex h-[22px] items-center whitespace-nowrap">
            <span className="flex w-[26px] shrink-0 pl-2">
              {row.open && <svg width="5" height="8" viewBox="0 0 5 8" aria-hidden="true"><path d="M0.500 0L4.500 4L0.500 8Z" fill="#666" /></svg>}
            </span>
            <Icon name={row.icon} />
            <span className="ml-[5px]">{row.text}</span>
          </li>
        ))}
      </ul>
      <div className="h-[3px] bg-[#3a8fc8]" />
      <div className="mt-auto mb-[2px] flex h-[15px] items-center bg-[#efefef] px-[5px]">
        <Chevron left />
        <div className="ml-[5px] h-full w-[130px] bg-[#cdcdcd]" />
        <span className="ml-auto"><Chevron /></span>
      </div>
      <div className="h-1 border-y border-[#c8c8c8]" />
      <div className="absolute top-[256px] -right-2 flex h-[39px] w-2 items-center justify-center border border-l-0 border-[#808080] bg-[#f7f7f7]">
        <span className="size-[5px] rounded-full border border-[#888] bg-[#ccc]" />
      </div>
    </section>
  );
}

/* The model space: coordinates follow the window the katana was laid out in. */
function ModelView() {
  return (
    <svg viewBox="330 139 987 574" className="absolute inset-0 h-full w-full" strokeLinejoin="round" role="img" aria-label="Katana model">
      <defs>
        <filter id="soft" x="-20%" y="-100%" width="140%" height="300%"><feGaussianBlur stdDeviation="4" /></filter>
        <linearGradient id="shade" x1="0" x2="1"><stop offset="0" stopColor="#bbb" stopOpacity="0.3" /><stop offset="0.35" stopColor="#bbb" stopOpacity="0.9" /><stop offset="1" stopColor="#ccc" stopOpacity="0" /></linearGradient>
        <linearGradient id="grip" x1="0" y1="0" x2="0.25" y2="1"><stop offset="0.35" stopColor="#4a4a4a" /><stop offset="0.5" stopColor="#303030" /><stop offset="1" stopColor="#2a2a2a" /></linearGradient>
      </defs>
      <path d="M1045 433L1110 417L1210 402L1300 394L1210 408L1110 429Z" fill="url(#shade)" filter="url(#soft)" />
      <path d="M417 413L500 433L560 444L620 452L680 456L735 456L790 453L845 448L900 438L960 426L1020 410L1077 393L1079 416L1010 435L950 449L870 465L800 474L735 478L675 478L620 475L560 467L500 456L446 444Q426 436 417 413Z" fill="#6a6460" />
      <path d="M423 415L500 433L560 444L620 452L680 456L735 456L790 453L845 448L900 438L960 426L1020 410L1077 393L1079 412L1010 430L940 446L860 461L800 468L740 472L680 472L610 468L546 460L500 450L447 438Q430 432 423 415Z" fill="#7d7871" stroke="#111" strokeWidth="1.2" />
      <path d="M417 413L500 433L560 444L620 452L680 456L735 456L790 453L845 448L900 438L960 426L1020 410L1077 393L1079 416L1010 435L950 449L870 465L800 474L735 478L675 478L620 475L560 467L500 456L446 444Q426 436 417 413ZM447 438L446 444" fill="none" stroke="#111" strokeWidth="1.3" />
      <path d="M845 447.5L900 437.5L960 425.5L1020 409.5L1072 394" fill="none" stroke="#111" strokeWidth="1.2" strokeDasharray="2 1" />
      <path d="M1101 385L1145 367L1212 344L1220 367L1107 407Z" fill="url(#grip)" stroke="#0a0a0a" strokeWidth="1.3" />
      <path d="M1103 391L1214 350M1105 399L1217 360" stroke="#080808" strokeWidth="1.2" />
      <path d="M1104 383L1145 366.5L1212 343.5" fill="none" stroke="#0a0a0a" strokeWidth="1.3" strokeDasharray="2 1" />
      <path d="M1210 344L1222 339Q1227 339 1228 343L1232 358Q1232 364 1229 365L1221 368L1218 366Z" fill="#a39c94" stroke="#111" strokeWidth="1.3" />
      <path d="M1210 344L1216 343L1222 367M1214 352L1229 347M1218 361L1232 358" fill="none" stroke="#111" />
      <path d="M1092 386L1099 384L1103 387L1107 404L1104 407L1096 409Z" fill="#9a938b" stroke="#111" strokeWidth="1.2" />
      <path d="M1094 392L1104 390M1096 401L1106 399" stroke="#111" />
      <ellipse cx="1087" cy="400.5" rx="9" ry="27.5" transform="rotate(-11 1087 400.5)" fill="#8d877f" stroke="#111" strokeWidth="1.2" />
      <ellipse cx="1084.5" cy="401" rx="8.5" ry="27.5" transform="rotate(-11 1084.5 401)" fill="#4c4a45" stroke="#111" strokeWidth="1.2" />
      <path d="M1071 392L1082 389.5L1088 411L1078 417Z" fill="#7d7871" stroke="#111" strokeWidth="1.3" />
      <path d="M1074 391L1080 416" stroke="#111" />
      <g fontFamily="Liberation Sans, sans-serif" fontSize="11">
        <path d="M370 654L367 632" stroke="#1c7a24" strokeWidth="3" /><path d="M363 636L366.5 624L371 635Z" fill="#1c7a24" />
        <path d="M371 654L388 651" stroke="#c01414" strokeWidth="3" /><path d="M385 646.5L397 650.5L387 656Z" fill="#9c1c1c" />
        <path d="M369 655L377 657" stroke="#15157a" strokeWidth="3" /><circle cx="380" cy="657" r="4.5" fill="#1717a8" />
        <text x="366.5" y="623" textAnchor="middle" fill="#1c9a24">Y</text>
        <text x="395" y="653" fill="#ee1c1c">X</text>
        <text x="382" y="662" fill="#1515d0">Z</text>
      </g>
    </svg>
  );
}

function TaskPane() {
  return (
    <div className="absolute top-[29px] right-0 flex w-[25px] flex-col border-t border-l border-[#808080]">
      {(["home", "books", "folderopen", "palette", "rgb", "proplist"] as const).map((n) => (
        <IconButton key={n} name={n} label={n} className={`h-6 border-b border-[#808080] ${n === "rgb" ? "bg-[#f7f7f7]" : "bg-[#d3d3d3]"}`} />
      ))}
    </div>
  );
}

const sideTools: { name: IconName; caret?: boolean; off?: boolean }[] = [
  { name: "line", caret: true },
  { name: "para", caret: true },
  { name: "slot", caret: true },
  { name: "circle", caret: true },
  { name: "arc", caret: true },
  { name: "spline", caret: true },
  { name: "ellipse", caret: true },
  { name: "fillet", caret: true, off: true },
  { name: "hex" },
  { name: "point" },
  { name: "plane3d" },
  { name: "letter" },
  { name: "trim", caret: true, off: true },
  { name: "convert", caret: true },
  { name: "offset", off: true },
  { name: "mirror", off: true },
];

function SideRow({ name, caret, off }: { name: IconName; caret?: boolean; off?: boolean }) {
  return (
    <div className="flex h-[26px] items-center pl-[10px]">
      <IconButton name={name} label={name} off={off} />
      {caret && <button type="button" aria-label={`${name} options`} className="flex h-5 w-6 items-center justify-center pl-0.5"><Caret off={off} /></button>}
    </div>
  );
}

function More() {
  return (
    <svg width="9" height="9" viewBox="0 0 9 9" fill="none" stroke="#444" strokeWidth="1.4" aria-hidden="true"><path d="M1 0.5L4.5 4L8 0.5M1 5L4.5 8.5L8 5" /></svg>
  );
}

function SideToolbar() {
  return (
    <aside className="flex w-[49px] shrink-0 flex-col bg-[#f7f7f7]">
      <div className="mt-[3px] mb-2 ml-1.5 h-0.5 border-t-2 border-dotted border-[#a0a0a0]" />
      <SideRow name="table" off />
      <SideRow name="sketch" caret />
      <SideRow name="smart" caret />
      <div className="my-[3px] ml-2 h-px bg-[#808080]" />
      {sideTools.map((t) => <SideRow key={t.name} {...t} />)}
      <button type="button" aria-label="More sketch tools" className="mt-3 ml-[22px] flex h-[9px]"><More /></button>
      <div className="mt-auto ml-[3px] h-[65px] border-t border-[#808080]">
        <div className="flex h-[62px] w-[34px] flex-col items-center border-r border-b border-[#808080] pt-1">
          <div className="w-7 border-t-2 border-dotted border-[#a0a0a0]" />
          <IconButton name="smart" label="Smart dimension" className="mt-2 h-[26px]" />
          <button type="button" aria-label="More dimension tools" className="mt-1"><More /></button>
        </div>
      </div>
    </aside>
  );
}

function DocTabs() {
  return (
    <div className="flex h-[15px] shrink-0 text-[11px] leading-[13px]">
      <div className="w-[100px] shrink-0" />
      <div className="flex w-[67px] shrink-0 border-t border-l border-[#555] bg-[#a9a9a9]">
        {["M4 3V11M11 3V11L6 7Z", "M10 3V11L5 7Z", "M5 3V11L10 7Z", "M4 3V11L9 7ZM11 3V11"].map((d, i) => (
          <button key={d} type="button" aria-label={["First tab", "Previous tab", "Next tab", "Last tab"][i]} className="flex flex-1 border-r border-[#888]">
            <svg width="14" height="14" viewBox="0 0 15 14" fill="#888" stroke="#888"><path d={d} /></svg>
          </button>
        ))}
      </div>
      <button type="button" className="w-14 shrink-0 pl-0.5 font-bold">Model</button>
      <button type="button" className="w-[109px] shrink-0 border border-b-0 border-[#808080] bg-[#d3d3d3] pr-2.5 leading-3">Motion Study 1</button>
      <div className="flex-1 border-t border-r border-[#808080]" />
    </div>
  );
}

function BraveIcon({ stripes = false }: { stripes?: boolean }) {
  return (
    <svg width="27" height="26" viewBox="0 0 27 26" aria-hidden="true">
      <path d="M7 1H15L17 3L20 3.500L21 8L19.500 17Q18 21 11.500 24.500Q5 21 3 17L1.500 8L3 3.500L5.500 3Z" fill="#f4511e" />
      <path d="M5.500 6L9 5.500L11 6.500L13.500 5.500L17 6L18 10L15 14L16 17L11 20.500L6.500 17L7.500 14L4.500 10Z" fill="#fff" />
      <path d="M6.500 9L10 10L9.500 11L7 10.500ZM16 9L12.500 10L13 11L15.500 10.500ZM10 11V14L11.200 15.500L12.500 14V11M8.500 17L11.200 16L14 17L11.200 19Z" fill="#f4511e" />
      <circle cx="20" cy="18.500" r="6.500" fill={stripes ? "#2fb56a" : "#8e3fc4"} />
      <path d={stripes ? "M14.500 17L20 12.500M14 20L24 13.500M16 22.500L26 16M19 24.500L26 20" : "M14 17L20 19L26 15M17 23L20.500 19L25 22"} stroke={stripes ? "#d8ffe6" : "#e7a0ff"} strokeWidth="1.2" fill="none" />
    </svg>
  );
}

const apps: { label: string; icon: ReactNode; running?: boolean }[] = [
  { label: "Cortana", icon: <svg width="24" height="24" viewBox="0 0 24 24" fill="none"><circle cx="12" cy="12" r="9.5" stroke="#0e6fb8" strokeWidth="4" /><circle cx="12" cy="12" r="9.5" stroke="#22b8f2" strokeWidth="2.2" /></svg> },
  { label: "Mail", icon: <svg width="24" height="24" viewBox="0 0 24 24"><path d="M0 9L12 1L24 9V23H0Z" fill="#1565b8" /><path d="M2 8H22V16H2Z" fill="#f2f6fa" /><path d="M0 9L12 18L24 9V23H0Z" fill="#35a0ea" /><path d="M12 18L24 9V23H6Z" fill="#1f86dc" /></svg> },
  { label: "MATLAB", icon: <svg width="24" height="24" viewBox="0 0 24 24"><path d="M0 14L8 10L12 14L7 18Z" fill="#3a78a8" /><path d="M8 10Q12 8 15 1L14 14L10 22L7 17L12 14Z" fill="#a8301c" /><path d="M15 1Q17 3 23 20Q18 15 15 19Q12 23 10 22Q14 14 15 1Z" fill="#e8762b" /></svg> },
  { label: "YouTube", running: true, icon: <svg width="24" height="22" viewBox="0 0 24 22"><rect y="2" width="24" height="19" rx="4" fill="#f00" /><path d="M9.500 7V16L16.500 11.500Z" fill="#fff" /></svg> },
  { label: "Visual Studio Code", running: true, icon: <svg width="24" height="24" viewBox="0 0 24 24"><path d="M17 0.5L24 3.5V20.5L17 23.5Z" fill="#2fa3ea" /><path d="M17 0.5V7L3 18L0.5 16Z" fill="#1277bd" /><path d="M17 23.5V17L3 6L0.5 8Z" fill="#1e8fd6" /></svg> },
  { label: "Brave", running: true, icon: <BraveIcon /> },
  { label: "XAMPP", running: true, icon: <span className="flex size-6 items-center justify-center rounded-sm bg-[#ef7a2a]"><SiXampp size={18} color="#fff" /></span> },
  { label: "Spotify", running: true, icon: <SiSpotify size={24} color="#1ed760" className="rounded-full bg-black" /> },
  { label: "Brave profile", running: true, icon: <BraveIcon stripes /> },
  { label: "File Explorer", running: true, icon: <svg width="22" height="22" viewBox="0 0 22 22"><path d="M1 1H9L11 3.5H21V19H1Z" fill="#e0a61c" /><path d="M1 5H21V20H1Z" fill="#fbd865" /><path d="M5 21V13H17V21H14V17H8V21Z" fill="#2f8fe0" /></svg> },
];

function Taskbar() {
  return (
    <footer className="flex h-10 shrink-0 items-center bg-[linear-gradient(90deg,#2f2524_0%,#352b28_18%,#2a2b2b_32%,#1d3236_42%,#213236_50%,#282d36_57%,#232a33_75%,#20262e_85%,#3a2a26_97%)] text-white">
      <button type="button" aria-label="Start" className="flex h-full w-12 shrink-0 items-center justify-center"><FaWindows size={17} /></button>
      <button type="button" aria-label="Search" className="flex h-full w-12 shrink-0 items-center justify-center">
        <svg width="18" height="18" viewBox="0 0 18 18" fill="none" stroke="#fff" strokeWidth="1.5"><circle cx="11" cy="6.5" r="5.5" /><path d="M7 10.5L1 17" /></svg>
      </button>
      <button type="button" aria-label="Task view" className="flex h-full w-[50px] shrink-0 items-center justify-center">
        <svg width="18" height="18" viewBox="0 0 18 18" fill="none" stroke="#fff" strokeWidth="1.3"><path d="M1.5 5.5H10.5V12.5H1.5ZM1.5 1V3H10.5V1M1.5 17V15H10.5V17M15 1V4M15 9V17" /><rect x="14" y="5" width="2" height="3" fill="#fff" /></svg>
      </button>
      {apps.map((a) => (
        <button key={a.label} type="button" aria-label={a.label} className="flex h-full w-[49px] shrink-0 flex-col items-center">
          <span className="flex flex-1 items-center">{a.icon}</span>
          <span className={`-mt-0.5 h-0.5 w-10 ${a.running ? "bg-[#76b9ed]" : ""}`} />
        </button>
      ))}
      <button type="button" aria-label="SOLIDWORKS 2021" className="ml-px flex h-full w-[45px] shrink-0 flex-col items-center bg-[#4a5a5f]">
        <svg width="26" height="38" viewBox="0 0 26 38" fontFamily="Liberation Sans, sans-serif" fontWeight="700">
          <path d="M2 11L12 8L24 11L23 25L12 30L3 26Z" fill="#8f1218" /><path d="M2 11L12 15V30L3 26Z" fill="#c41a22" /><path d="M2 11L12 8L24 11L12 15Z" fill="#ee2b30" />
          <text x="7.500" y="25" fontSize="12" textAnchor="middle" fill="#fff">S</text>
          <text x="17.500" y="24" fontSize="11" textAnchor="middle" fill="#fff">W</text>
          <text x="16" y="31" fontSize="8" textAnchor="middle" fill="#fff" stroke="#222" strokeWidth="2" paintOrder="stroke">2021</text>
        </svg>
        <span className="h-0.5 w-full bg-[#76b9ed]" />
      </button>
      <div className="h-full w-1 shrink-0 border-l border-[#1f3033] bg-[#3c4d51]" />
      <div className="ml-auto flex shrink-0 items-center">
        <svg width="23" height="22" viewBox="0 0 23 22"><circle cx="11" cy="10.5" r="10" fill="#f59a1b" /><path d="M11 17.5A4 4 0 0 1 12 10Q16 7 18.5 11Q22.5 12 21.5 16Q21 17.5 19 17.5Z" fill="#c7d8f7" /></svg>
        <span className="ml-2 text-[13px] whitespace-pre">28°C  Mostly sunny</span>
        <div className="ml-6 flex items-center gap-2">
          <svg width="12" height="7" viewBox="0 0 12 7" fill="none" stroke="#fff" strokeWidth="1.2"><path d="M0.5 6.5L6 1L11.5 6.5" /></svg>
          <svg width="16" height="14" viewBox="0 0 16 14" fill="none" stroke="#fff" strokeWidth="1.2" className="ml-0.5"><path d="M1 12Q2 2 13 1M4 13Q5 5.5 13 4.5M7 13.5Q8 8.5 13 8" /><circle cx="11.5" cy="12" r="1.5" fill="#fff" stroke="none" /></svg>
          <svg width="17" height="13" viewBox="0 0 17 13" fill="none" stroke="#fff"><path d="M5.5 3.5H15.5V11.5H3.5V8M16.5 6V9M1.5 0V2.5M4.5 0V2.5M0.5 2.5H5.5V5Q3 8 0.5 5Z" /><path d="M7 5H14V10H5V8.5H7Z" fill="#fff" stroke="none" /></svg>
          <svg width="16" height="14" viewBox="0 0 16 14" fill="none" stroke="#fff"><path d="M0.5 5H3L6.5 1.5V12.5L3 9H0.5ZM8.5 5Q10 7 8.5 9M10.5 3Q13.5 7 10.5 11" /><path d="M12.5 1Q17.5 7 12.5 13" stroke="#999" /></svg>
          <span className="ml-0.5 text-[12px]">ENG</span>
        </div>
        <div className="ml-3 text-center text-[11px] leading-[18px]">
          <div>10:21 AM</div>
          <div>7/1/2023</div>
        </div>
        <button type="button" aria-label="Notifications" className="ml-5">
          <svg width="17" height="17" viewBox="0 0 17 17"><path d="M0 1H17V13H11L8.5 16.5L6 13H0Z" fill="#fff" /><path d="M3 4.5H14M3 7.5H14M3 10.5H10" stroke="#2a2522" /></svg>
        </button>
        <div className="ml-5 h-10 w-[5px] border-l border-[#8a7d78]" />
      </div>
    </footer>
  );
}

export default function App() {
  return (
    <div className="flex min-h-screen flex-col overflow-x-hidden bg-[#f7f7f7] font-['Noto_Sans',sans-serif] text-black">
      <TitleBar />
      <Ribbon />
      <div className="flex flex-1">
        <div className="flex min-w-0 flex-1 flex-col">
          <TabRow />
          <div className="flex flex-1">
            <div className="flex w-[100px] shrink-0 items-start">
              <ToolColumn
                width="w-[34px]"
                items={["boltTarget", "dimbox", "dimbox2", "basicdim", "datum", "geotol", "people", null, "plusEye", null, "vdim"]}
                off={["plusEye", "vdim"]}
              />
              <ToolColumn width="w-[34px]" items={col2} off={col2.filter((n) => n !== "noteGo")} />
              <ToolColumn width="w-[31px]" items={col3} off={col3} />
            </div>
            <FeatureTree />
            <main className="relative min-w-0 flex-1 bg-white">
              <ModelView />
              <TaskPane />
            </main>
          </div>
          <DocTabs />
        </div>
        <SideToolbar />
      </div>
      <Taskbar />
    </div>
  );
}
